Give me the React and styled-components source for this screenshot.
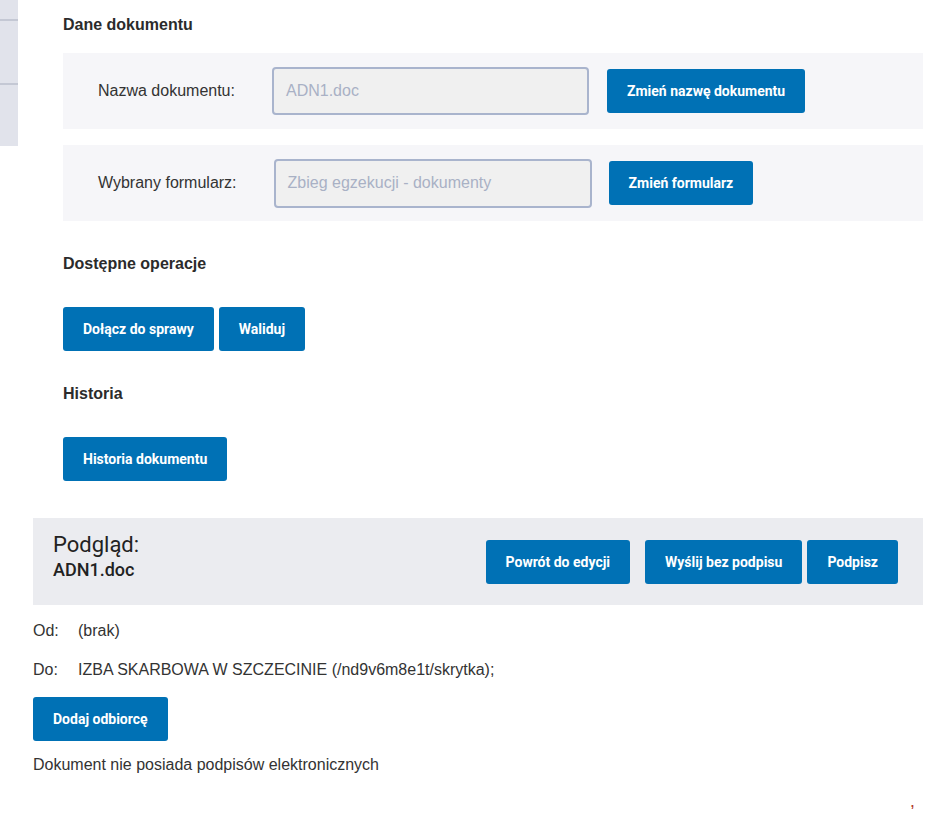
import React from "react";
import styled, { createGlobalStyle } from "styled-components";

const Global = createGlobalStyle`
  html, body { margin: 0; padding: 0; background: #ffffff; }
  body { font-family: "Liberation Sans", Arial, sans-serif; color: #2e2e2e; }
  * { box-sizing: border-box; }
`;

const Page = styled.div`
  display: flex;
  align-items: flex-start;
  width: 950px;
  min-height: 814px;
`;

const Sidebar = styled.div`
  width: 18px;
  height: 146px;
  flex: none;
  display: flex;
  flex-direction: column;
  background: #e1e3eb;
`;

const SideItem = styled.div`
  height: ${(p) => p.$h}px;
  border-bottom: ${(p) => (p.$line ? "2px solid #c4c8d4" : "none")};
`;

const Main = styled.div`
  width: 905px;
  padding-left: 15px;
  display: flex;
  flex-direction: column;
`;

const Top = styled.section`
  padding-left: 30px;
  display: flex;
  flex-direction: column;
`;

const Heading = styled.h3`
  margin: ${(p) => p.$mt}px 0 ${(p) => p.$mb}px 0;
  font-family: "Liberation Sans", Arial, sans-serif;
  font-size: 16px;
  font-weight: 700;
  line-height: 20px;
  color: #2b2b2b;
`;

const Panel = styled.div`
  height: 76px;
  background: #f6f6f9;
  display: flex;
  align-items: center;
  padding-left: 35px;
  margin-bottom: ${(p) => p.$mb || 0}px;
`;

const Label = styled.span`
  font-size: 16px;
  color: #333;
  margin-right: 37px;
`;

const Field = styled.div`
  width: ${(p) => p.$w || 318}px;
  height: ${(p) => p.$h || 49}px;
  border: 2px solid #a9b4cd;
  border-radius: 4px;
  background: #f0f0f0;
  display: flex;
  align-items: center;
  padding-left: 12px;
  font-size: 16px;
  color: #a9b1c5;
  margin-right: 17px;
`;

const Button = styled.button`
  height: 44px;
  padding: 0 20px;
  border: none;
  border-radius: 3px;
  background: #0071b5;
  color: #ffffff;
  font-family: Roboto, "Liberation Sans", sans-serif;
  font-weight: 700;
  font-size: 14px;
  cursor: pointer;
  white-space: nowrap;
`;

const ButtonRow = styled.div`
  display: flex;
  gap: 5px;
  align-items: center;
  margin-top: ${(p) => p.$mt || 0}px;
`;

const Preview = styled.section`
  margin-top: 37px;
  height: 87px;
  background: #ebecf0;
  display: flex;
  align-items: center;
  justify-content: space-between;
  padding: 0 25px 0 20px;
`;

const TitleBlock = styled.div`
  display: flex;
  flex-direction: column;
  align-self: flex-start;
  padding-top: 13px;
  font-family: Roboto, "Liberation Sans", sans-serif;
  color: #222;
`;

const Title = styled.div`
  font-size: 22px;
  line-height: 28px;
`;

const FileName = styled.div`
  font-size: 18px;
  font-weight: 500;
  line-height: 22px;
`;

const Spacer = styled.span`
  width: 5px;
`;

const InfoRow = styled.div`
  display: flex;
  font-size: 16px;
  line-height: 20px;
  color: #333;
  margin-top: ${(p) => p.$mt}px;
`;

const InfoKey = styled.span`
  width: 45px;
  flex: none;
`;

const Note = styled.p`
  margin: 14px 0 0 0;
  font-size: 16px;
  line-height: 20px;
  color: #333;
`;

const Foot = styled.div`
  display: flex;
  justify-content: flex-end;
  padding-right: 9px;
  margin-top: 22px;
`;

const Mark = styled.span`
  font-size: 12px;
  line-height: 12px;
  font-weight: 700;
  color: #b03a2e;
`;

export default function App() {
  return (
    <>
      <Global />
      <Page>
        <Sidebar>
          <SideItem $h={21} $line />
          <SideItem $h={64} $line />
          <SideItem $h={61} />
        </Sidebar>
        <Main>
          <Top>
            <Heading $mt={15} $mb={18}>Dane dokumentu</Heading>
            <Panel $mb={16}>
              <Label>Nazwa dokumentu:</Label>
              <Field $w={317} $h={48} style={{ marginRight: 18 }}>ADN1.doc</Field>
              <Button>Zmień nazwę dokumentu</Button>
            </Panel>
            <Panel>
              <Label>Wybrany formularz:</Label>
              <Field>Zbieg egzekucji - dokumenty</Field>
              <Button>Zmień formularz</Button>
            </Panel>
            <Heading $mt={33} $mb={33}>Dostępne operacje</Heading>
            <ButtonRow>
              <Button>Dołącz do sprawy</Button>
              <Button>Waliduj</Button>
            </ButtonRow>
            <Heading $mt={33} $mb={33}>Historia</Heading>
            <ButtonRow>
              <Button>Historia dokumentu</Button>
            </ButtonRow>
          </Top>
          <Preview>
            <TitleBlock>
              <Title>Podgląd:</Title>
              <FileName>ADN1.doc</FileName>
            </TitleBlock>
            <ButtonRow>
              <Button>Powrót do edycji</Button>
              <Spacer />
              <Button>Wyślij bez podpisu</Button>
              <Button>Podpisz</Button>
            </ButtonRow>
          </Preview>
          <InfoRow $mt={16}>
            <InfoKey>Od:</InfoKey>
            <span>(brak)</span>
          </InfoRow>
          <InfoRow $mt={19}>
            <InfoKey>Do:</InfoKey>
            <span>IZBA SKARBOWA W SZCZECINIE (/nd9v6m8e1t/skrytka);</span>
          </InfoRow>
          <ButtonRow $mt={17}>
            <Button>Dodaj odbiorcę</Button>
          </ButtonRow>
          <Note>Dokument nie posiada podpisów elektronicznych</Note>
          <Foot>
            <Mark>,</Mark>
          </Foot>
        </Main>
      </Page>
    </>
  );
}
